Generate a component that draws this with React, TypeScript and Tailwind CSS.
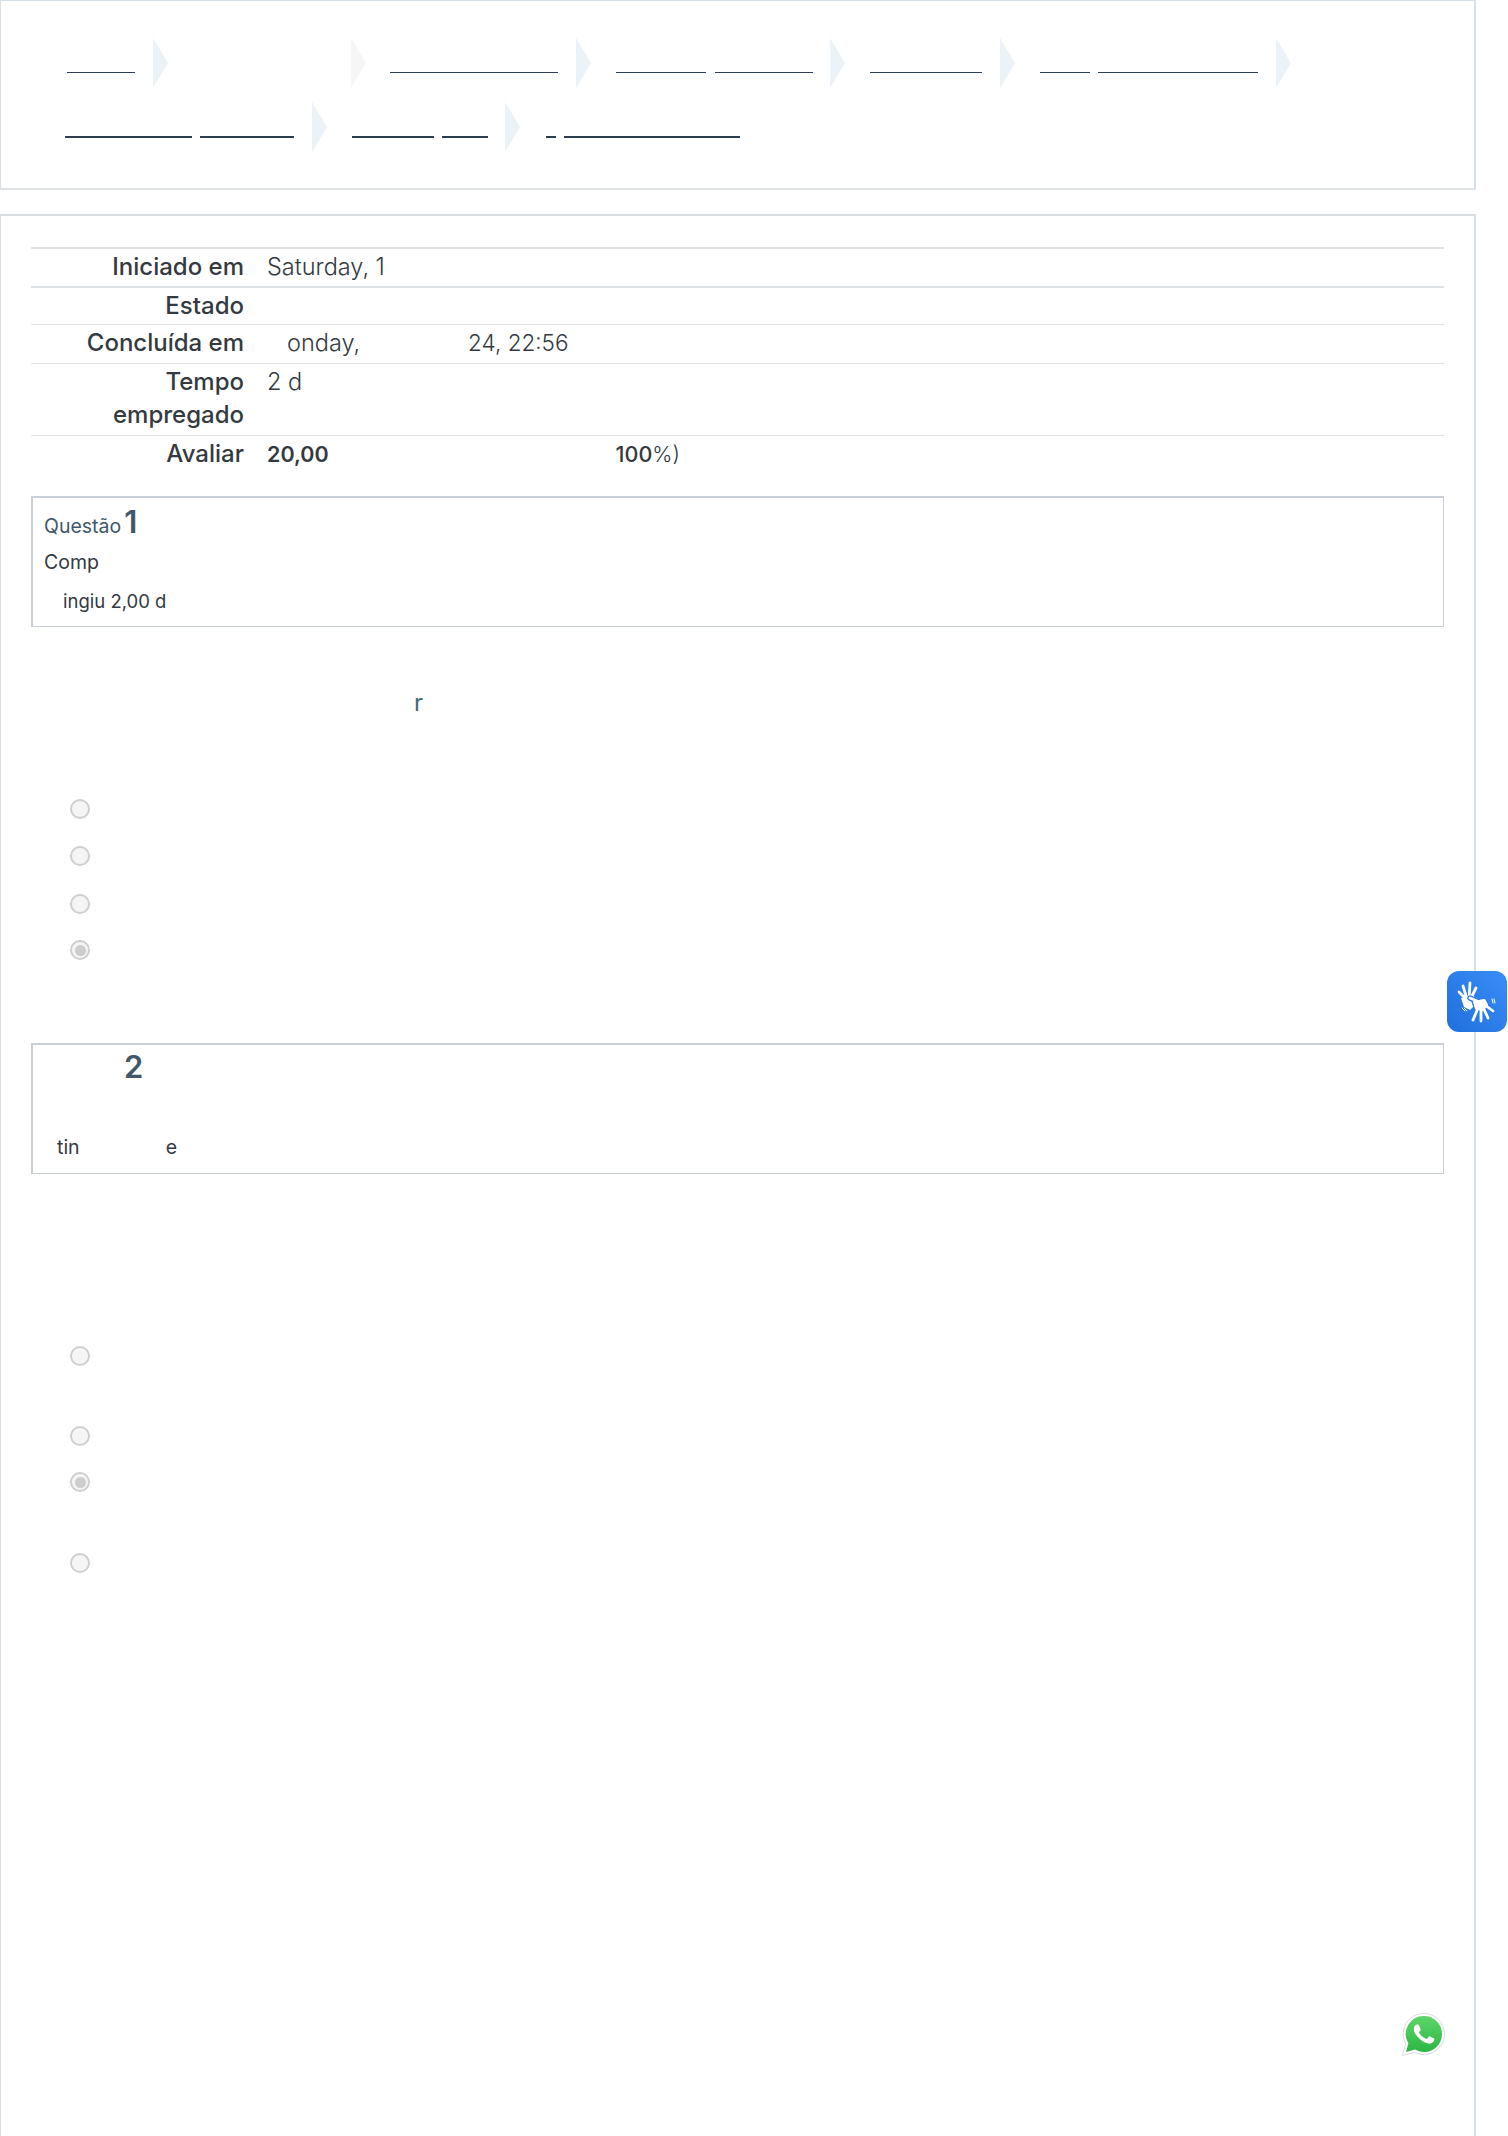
import React from 'react';

const Crumb = ({ w, ml = '' }: { w: string; ml?: string }) => <a className={`block h-0 border-b border-[#2c3e50] ${w} ${ml}`} />;

const Chevron = ({ ml, light = false }: { ml: string; light?: boolean }) => (
  <svg viewBox="0 0 15 50" className={`h-[50px] w-[15px] shrink-0 ${ml} ${light ? 'text-[#f6f6f6]' : 'text-[#ebf3f8]'}`}>
    <polygon points="0,0 15,25 0,50" fill="currentColor" />
  </svg>
);

const Radio = ({ checked = false, className = '' }: { checked?: boolean; className?: string }) => (
  <div className={`ml-[39px] flex h-[20px] w-[20px] items-center justify-center rounded-full border-2 border-[#cfcfcf] bg-[#f5f5f5] ${className}`}>
    {checked && <div className="h-[11px] w-[11px] rounded-full bg-[#cdcdcd]" />}
  </div>
);

const Row = ({ label, children, h, border = 'border-t' }: { label: React.ReactNode; children?: React.ReactNode; h: string; border?: string }) => (
  <div className={`flex border-[#dee2e6] ${border} ${h}`}>
    <div className="w-[213px] pt-[1px] text-right text-[24px] leading-[33px] font-medium text-[#343a40]">{label}</div>
    <div className="pt-[1px] pl-[23px] text-[23.5px] leading-[33px] font-light text-[#343a40]">{children}</div>
  </div>
);

const HandsIcon = () => (
  <svg viewBox="0 0 60 60" className="h-[60px] w-[60px]" fill="none" strokeLinecap="round">
    <g stroke="#ffffff" strokeWidth="2.8">
      <path d="M20 28 12 20M20 27 16 14M22 27 23 11M23 28 29 16" />
    </g>
    <path d="M14 26 27 24 29 32 23 38 17 35z" fill="#ffffff" />
    <g stroke="#2a7ce8" strokeWidth="5.5">
      <path d="M31 36 26 48M34 36 34 49M36 35 41 46M38 33 46 39M30 29 23 26" />
    </g>
    <path d="M25 29 38 26 42 33 36 40 28 38z" fill="#ffffff" stroke="#2a7ce8" strokeWidth="1.5" />
    <g stroke="#ffffff" strokeWidth="2.8">
      <path d="M31 36 26 48M34 36 34 49M36 35 41 46M38 33 46 39M30 29 23 26" />
    </g>
    <path d="M26 29 38 27 41 33 36 39 28 37z" fill="#ffffff" />
    <path d="M15 36 18 39M17 36 20 39M45 27 46 31M47 27 48 31" stroke="#ffffff" strokeWidth="1" />
  </svg>
);

export default function App() {
  return (
    <div className="relative h-[2136px] w-[1508px] overflow-hidden bg-white font-['Inter','Liberation_Sans',sans-serif]">
      <div className="h-[190px] w-[1476px] border border-r-2 border-[#d6e0e6] border-b-2 border-b-[#dee2e6]">
        <div className="mt-[37px] flex h-[50px] items-start">
          <div className="mt-[34px]"><Crumb w="w-[68px]" ml="ml-[66px]" /></div>
          <Chevron ml="ml-[18px]" />
          <Chevron ml="ml-[183px]" light />
          <div className="mt-[34px]"><Crumb w="w-[168px]" ml="ml-[24px]" /></div>
          <Chevron ml="ml-[18px]" />
          <div className="mt-[34px]"><Crumb w="w-[90px]" ml="ml-[25px]" /></div>
          <div className="mt-[34px]"><Crumb w="w-[98px]" ml="ml-[9px]" /></div>
          <Chevron ml="ml-[17px]" />
          <div className="mt-[34px]"><Crumb w="w-[112px]" ml="ml-[25px]" /></div>
          <Chevron ml="ml-[18px]" />
          <div className="mt-[34px]"><Crumb w="w-[50px]" ml="ml-[25px]" /></div>
          <div className="mt-[34px]"><Crumb w="w-[160px]" ml="ml-[8px]" /></div>
          <Chevron ml="ml-[18px]" />
        </div>
        <div className="mt-[14px] flex h-[51px] items-start">
          <div className="mt-[34px]"><div className="ml-[64px] h-[2px] w-[127px] bg-[#2c3e50]" /></div>
          <div className="mt-[34px]"><div className="ml-[8px] h-[2px] w-[94px] bg-[#2c3e50]" /></div>
          <Chevron ml="ml-[18px]" />
          <div className="mt-[34px]"><div className="ml-[25px] h-[2px] w-[82px] bg-[#2c3e50]" /></div>
          <div className="mt-[34px]"><div className="ml-[8px] h-[2px] w-[46px] bg-[#2c3e50]" /></div>
          <Chevron ml="ml-[17px]" />
          <div className="mt-[34px]"><div className="ml-[26px] h-[2px] w-[10px] bg-[#2c3e50]" /></div>
          <div className="mt-[34px]"><div className="ml-[8px] h-[2px] w-[176px] bg-[#2c3e50]" /></div>
        </div>
      </div>

      <div className="mt-[24px] h-[1922px] w-[1476px] border-t-2 border-r-2 border-l border-[#d6e0e6] border-t-[#d9dee2] pt-[31px] pl-[30px]">
        <div className="w-[1413px]">
          <Row label="Iniciado em" h="h-[39px]" border="border-t-2">Saturday, 1</Row>
          <Row label="Estado" h="h-[38px]" border="border-t-2" />
          <Row label="Concluída em" h="h-[39px]">
            <span className="ml-[20px]">onday,</span>
            <span className="ml-[108px] text-[22.5px]">24, 22:56</span>
          </Row>
          <Row label={<>Tempo<br />empregado</>} h="h-[72px]">2 d</Row>
          <Row label="Avaliar" h="h-[61px]">
            <span className="text-[21.5px] font-semibold">20,00</span>
            <span className="ml-[287px] text-[21.5px] font-medium">100<span className="font-light">%)</span></span>
          </Row>
        </div>

        <div className="h-[131px] w-[1413px] border border-t-2 border-l-2 border-[#c9cfd8] pl-[11px]">
          <div className="flex h-[40px] items-baseline pt-[5px] text-[19.5px] leading-[38px] text-[#42586a]">
            Questão<span className="ml-[3px] text-[31px] font-semibold">1</span>
          </div>
          <div className="pt-[5px] text-[19.5px] leading-[39px] text-[#343a40]">Comp</div>
          <div className="pl-[19px] text-[18.5px] leading-[39px] text-[#343a40]">ingiu 2,00 d</div>
        </div>

        <div className="mt-[58px] pl-[383px] text-[24px] leading-[36px] text-[#3e6a7a]">r</div>
        <Radio className="mt-[78px]" />
        <Radio className="mt-[27px]" />
        <Radio className="mt-[28px]" />
        <Radio checked className="mt-[26px]" />

        <div className="mt-[83px] h-[131px] w-[1413px] border border-t-2 border-l-2 border-[#c9cfd8] pl-[11px]">
          <div className="h-[83px] pl-[80px] text-[31px] leading-[44px] font-semibold text-[#42586a]">2</div>
          <div className="pl-[13px] text-[19.5px] leading-[39px] text-[#343a40]">
            tin<span className="ml-[86px]">e</span>
          </div>
        </div>

        <Radio className="mt-[172px]" />
        <Radio className="mt-[60px]" />
        <Radio checked className="mt-[26px]" />
        <Radio className="mt-[61px]" />
      </div>

      <div className="absolute top-[971px] left-[1447px] flex h-[61px] w-[60px] items-center justify-center rounded-[12px] bg-gradient-to-tr from-[#1f6fdc] to-[#3a8ef8]">
        <HandsIcon />
      </div>

      <svg viewBox="0 0 44 46" className="absolute top-[2012px] left-[1401px] h-[46px] w-[44px]">
        <defs>
          <linearGradient id="wa" x1="0" y1="0" x2="0" y2="1">
            <stop offset="0" stopColor="#5fd56c" />
            <stop offset="1" stopColor="#2bb742" />
          </linearGradient>
        </defs>
        <path d="M23 1.5a20.5 20.5 0 0 1 0 41c-3.4 0-6.6-.8-9.4-2.3L1.5 43.5l3.3-11.6A20.5 20.5 0 0 1 23 1.5z" fill="#ffffff" stroke="#dcdcdc" strokeWidth="1" />
        <path d="M23 4a18 18 0 0 1 0 36c-3.3 0-6.3-.9-9-2.4L5 40l2.4-8.7A18 18 0 0 1 23 4z" fill="url(#wa)" />
        <g transform="translate(2.6 1.6) scale(1.7)">
          <path fill="#ffffff" d="M17.472 14.382c-.297-.149-1.758-.867-2.03-.967-.273-.099-.471-.148-.67.15-.197.297-.767.966-.94 1.164-.173.199-.347.223-.644.075-.297-.15-1.255-.463-2.39-1.475-.883-.788-1.48-1.761-1.653-2.059-.173-.297-.018-.458.13-.606.134-.133.298-.347.446-.52.149-.174.198-.298.298-.497.099-.198.05-.371-.025-.52-.075-.149-.669-1.612-.916-2.207-.242-.579-.487-.5-.669-.51-.173-.008-.371-.01-.57-.01-.198 0-.52.074-.792.372-.272.297-1.04 1.016-1.04 2.479 0 1.462 1.065 2.875 1.213 3.074.149.198 2.096 3.2 5.077 4.487.709.306 1.262.489 1.694.625.712.227 1.36.195 1.871.118.571-.085 1.758-.719 2.006-1.413.248-.694.248-1.289.173-1.413-.074-.124-.272-.198-.57-.347z" />
        </g>
      </svg>
    </div>
  );
}
